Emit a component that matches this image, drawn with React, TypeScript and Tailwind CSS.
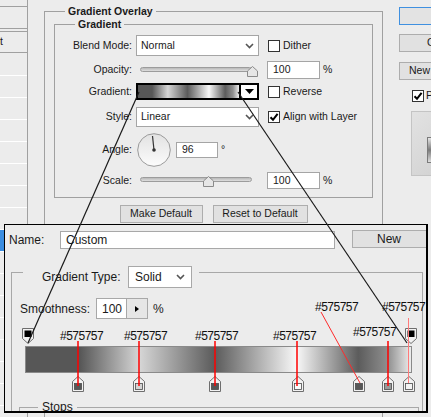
import React from 'react';

// shared gradient used by the small preview and the big editor bar
const GRADIENT =
  'bg-[linear-gradient(to_right,#575757_0%,#575757_14%,#d6d6d6_29.5%,#5b5b5b_49%,#f8f8f8_70.3%,#5c5c5c_86.3%,#8f8f8f_94%,#ededed_100%)]';

function Chevron() {
  return (
    <svg width="9" height="6" viewBox="0 0 9 6">
      <path d="M1 1l3.5 3.5L8 1" fill="none" stroke="#555" strokeWidth="1.6" />
    </svg>
  );
}

function Checkbox({ checked = false }: { checked?: boolean }) {
  return (
    <div className="w-[12px] h-[12px] shrink-0 bg-white border border-[#333] flex items-center justify-center">
      {checked && (
        <svg width="10" height="10" viewBox="0 0 10 10">
          <path d="M1.5 5.2 L4 7.8 L8.6 1.8" fill="none" stroke="#000" strokeWidth="2" />
        </svg>
      )}
    </div>
  );
}

function Thumb() {
  return (
    <svg width="11" height="11" viewBox="0 0 11 11">
      <path d="M5.5 0.5 L10.5 5 V10.5 H0.5 V5 Z" fill="#e6e6e6" stroke="#8a8a8a" />
    </svg>
  );
}

function Slider({ thumb }: { thumb: string }) {
  return (
    <div className="relative w-[123px] h-[17px] shrink-0">
      <div className="absolute left-[4px] top-[5px] w-[112px] h-[5px] rounded-full border border-[#9c9c9c] bg-[linear-gradient(#b9b9b9,#dedede)]" />
      <div className={`absolute top-[4px] ${thumb}`}>
        <Thumb />
      </div>
    </div>
  );
}

function Row({ label, className, children }: { label: string; className: string; children: React.ReactNode }) {
  return (
    <div className={`flex items-center ${className}`}>
      <div className="w-[77px] shrink-0 text-right">{label}</div>
      <div className="ml-[4px] flex items-center">{children}</div>
    </div>
  );
}

function Select({ text, className }: { text: string; className: string }) {
  return (
    <div className={`shrink-0 bg-white border border-[#a5a5a5] flex items-center justify-between pl-[4px] pr-[4px] ${className}`}>
      <span>{text}</span>
      <Chevron />
    </div>
  );
}

function LeftPanel() {
  const rows = Array.from({ length: 16 }, (_, i) => i);
  return (
    <div className="w-[28px] h-[417px] shrink-0 border-r border-[#a0a0a0] overflow-hidden">
      <div className="mt-[6px] h-[23px] border-y border-[#a0a0a0]" />
      <div className="mt-[2px] h-[22px] border-y border-[#a0a0a0] flex items-center justify-end pr-[24px] whitespace-nowrap">
        Blending Options: Default
      </div>
      {rows.map((i) => (
        <div
          key={i}
          className={`border-b border-white ${i === 0 ? 'h-[23px]' : 'h-[22px]'} ${i === 8 ? 'bg-[#3b8de0]' : ''}`}
        />
      ))}
    </div>
  );
}

function OverlayGroup() {
  return (
    <fieldset className="ml-[16px] mt-[4px] w-[339px] h-[430px] shrink-0 border border-[#a0a0a0]">
      <legend className="ml-[20px] px-[3px] font-bold leading-[14px]">Gradient Overlay</legend>

      <fieldset className="ml-[9px] w-[319px] border border-[#a0a0a0] pb-[8px]">
        <legend className="ml-[20px] px-[3px] font-bold leading-[12px]">Gradient</legend>

        <Row label="Blend Mode:" className="mt-[5px] h-[21px]">
          <Select text="Normal" className="w-[123px] h-[21px]" />
          <div className="ml-[9px] flex items-center gap-[3px]">
            <Checkbox />
            <span>Dither</span>
          </div>
        </Row>

        <Row label="Opacity:" className="mt-[5px] h-[18px]">
          <Slider thumb="left-[111px]" />
          <div className="ml-[8px] w-[53px] h-[18px] shrink-0 bg-white border border-[#a5a5a5] pl-[5px] flex items-center">100</div>
          <span className="ml-[3px]">%</span>
        </Row>

        <Row label="Gradient:" className="mt-[4px] h-[17px]">
          <div className={`w-[105px] h-[17px] shrink-0 border-2 border-black ${GRADIENT}`} />
          <div className="w-[18px] h-[17px] shrink-0 border-2 border-l-0 border-black bg-white flex items-center justify-center">
            <svg width="9" height="5" viewBox="0 0 9 5">
              <path d="M0 0 H9 L4.5 5 Z" fill="#000" />
            </svg>
          </div>
          <div className="ml-[9px] flex items-center gap-[3px]">
            <Checkbox />
            <span>Reverse</span>
          </div>
        </Row>

        <Row label="Style:" className="mt-[7px] h-[20px]">
          <Select text="Linear" className="w-[123px] h-[20px]" />
          <div className="ml-[9px] flex items-center gap-[3px]">
            <Checkbox checked />
            <span>Align with Layer</span>
          </div>
        </Row>

        <Row label="Angle:" className="mt-[6px] h-[34px]">
          <svg width="34" height="34" viewBox="0 0 34 34" className="ml-[1px] shrink-0">
            <defs>
              <linearGradient id="dial" x1="0" y1="0" x2="0" y2="1">
                <stop offset="0" stopColor="#e2e2e2" />
                <stop offset="0.55" stopColor="#f0f0f0" />
                <stop offset="1" stopColor="#fcfcfc" />
              </linearGradient>
            </defs>
            <circle cx="17" cy="17" r="16.3" fill="url(#dial)" stroke="#9a9a9a" />
            <line x1="17" y1="17" x2="15.5" y2="3" stroke="#333" strokeWidth="1.2" />
            <circle cx="17" cy="17" r="1.8" fill="#333" />
          </svg>
          <div className="ml-[5px] w-[42px] h-[16px] shrink-0 bg-white border border-[#a5a5a5] pl-[5px] flex items-center">96</div>
          <span className="ml-[3px] self-start mt-[9px]">°</span>
        </Row>

        <Row label="Scale:" className="mt-[5px] h-[17px]">
          <Slider thumb="left-[67px]" />
          <div className="ml-[8px] w-[53px] h-[17px] shrink-0 bg-white border border-[#a5a5a5] pl-[5px] flex items-center">100</div>
          <span className="ml-[3px]">%</span>
        </Row>
      </fieldset>

      <div className="mt-[7px] flex justify-center gap-[10px]">
        <div className="w-[83px] h-[18px] bg-[#e1e1e1] border border-[#adadad] flex items-center justify-center">Make Default</div>
        <div className="w-[95px] h-[18px] bg-[#e1e1e1] border border-[#adadad] flex items-center justify-center">Reset to Default</div>
      </div>
    </fieldset>
  );
}

function RightColumn() {
  return (
    <div className="ml-[16px] w-[70px] shrink-0 flex flex-col whitespace-nowrap">
      <div className="mt-[7px] h-[18px] border border-[#3f90e0] bg-[#e3e3e3] pl-[38px] flex items-center">OK</div>
      <div className="mt-[9px] h-[18px] border border-[#adadad] bg-[#e1e1e1] pl-[27px] flex items-center">Cancel</div>
      <div className="mt-[10px] h-[18px] border border-[#adadad] bg-[#e1e1e1] pl-[9px] flex items-center">New Style...</div>
      <div className="mt-[10px] h-[12px] flex items-center">
        <div className="ml-[13px]">
          <Checkbox checked />
        </div>
        <span className="ml-[2px]">Preview</span>
      </div>
      <div className="mt-[9px] ml-[12px] w-[50px] h-[65px] border border-[#c4c4c4] bg-[linear-gradient(135deg,#e2e2e2,#cfcfcf)]">
        <div className="mt-[25px] ml-[15px] w-[22px] h-[26px] border border-[#7a7a7a] bg-[linear-gradient(to_bottom,#e6e6e6,#7a7a7a,#dedede)]" />
      </div>
    </div>
  );
}

function OpacityStop() {
  return (
    <svg width="12" height="16" viewBox="0 0 12 16">
      <path d="M0.5 0.5 H11.5 V10.5 L6 15.5 L0.5 10.5 Z" fill="#f2f2f2" stroke="#6e6e6e" />
      <rect x="2.5" y="2.5" width="7" height="6.5" fill="#000" />
    </svg>
  );
}

function ColorStop({ fill }: { fill: string }) {
  return (
    <svg width="12" height="16" viewBox="0 0 12 16">
      <path d="M6 0.5 L11.5 5.5 V15.5 H0.5 V5.5 Z" fill="#f2f2f2" stroke="#6e6e6e" />
      <rect x="2.5" y="7.5" width="7" height="6" fill={fill} stroke="#4a4a4a" strokeWidth="0.8" />
    </svg>
  );
}

const colorStops = [
  { pos: 'left-[46px]', fill: '#575757' },
  { pos: 'left-[107px]', fill: '#d4d4d4' },
  { pos: 'left-[183px]', fill: '#575757' },
  { pos: 'left-[266px]', fill: '#fafafa' },
  { pos: 'left-[327px]', fill: '#575757' },
  { pos: 'left-[356px]', fill: '#9a9a9a' },
  { pos: 'left-[377px]', fill: '#f4f4f4' },
];

function GradientEditor() {
  return (
    <div className="absolute left-[4px] top-[224px] w-[424px] h-[189px] border-l border-t border-r-2 border-b-2 border-black bg-[#ececec] overflow-hidden text-[12px]">
      <div className="mt-[5px] h-[19px] flex items-start">
        <div className="ml-[4px] w-[51px] h-[19px] shrink-0 flex items-center">Name:</div>
        <div className="mt-[1px] w-[275px] h-[18px] shrink-0 bg-white border border-[#a8a8a8] pl-[5px] flex items-center">Custom</div>
        <div className="ml-[17px] w-[80px] h-[18px] shrink-0 bg-[#e1e1e1] border border-[#adadad] pl-[24px] flex items-center">New</div>
      </div>

      <div className="mt-[23px] ml-[6px] w-[412px] h-[200px] border border-[#a8a8a8]">
        <div className="-mt-[7px] ml-[11px] w-fit h-[22px] flex items-center bg-[#ececec] pl-[19px] pr-[7px]">
          <span className="w-[82px] shrink-0">Gradient Type:</span>
          <div className="ml-[4px] w-[64px] h-[22px] bg-white border border-[#a8a8a8] pl-[6px] pr-[6px] flex items-center justify-between">
            <span>Solid</span>
            <Chevron />
          </div>
        </div>

        <div className="mt-[10px] ml-[8px] h-[21px] flex items-center">
          <span className="w-[76px] shrink-0">Smoothness:</span>
          <div className="w-[31px] h-[21px] bg-white border border-[#a8a8a8] pl-[5px] flex items-center">100</div>
          <div className="w-[21px] h-[21px] bg-[#e6e6e6] border border-l-0 border-[#a8a8a8] flex items-center justify-center">
            <svg width="4" height="6" viewBox="0 0 4 6">
              <path d="M0 0 L4 3 L0 6 Z" fill="#000" />
            </svg>
          </div>
          <span className="ml-[5px]">%</span>
        </div>

        <div className={`relative mt-[27px] ml-[13px] w-[387px] h-[27px] border border-[#8a8a8a] ${GRADIENT}`}>
          <div className="absolute left-[-4px] top-[-19px]">
            <OpacityStop />
          </div>
          <div className="absolute left-[379px] top-[-19px]">
            <OpacityStop />
          </div>
          {colorStops.map((s) => (
            <div key={s.pos} className={`absolute top-[29px] ${s.pos}`}>
              <ColorStop fill={s.fill} />
            </div>
          ))}
        </div>

        <div className="mt-[34px] ml-[7px] w-[400px] h-[20px] border-t border-x border-[#a8a8a8]">
          <div className="-mt-[8px] ml-[18px] w-fit px-[4px] bg-[#ececec] leading-[14px]">Stops</div>
        </div>
      </div>
    </div>
  );
}

const labels = [
  'left-[60px] top-[330px]',
  'left-[124px] top-[330px]',
  'left-[195px] top-[330px]',
  'left-[273px] top-[330px]',
  'left-[353px] top-[326px]',
  'left-[315px] top-[301px]',
  'left-[382px] top-[301px]',
];

function Annotations() {
  return (
    <>
      <svg className="absolute left-0 top-0 pointer-events-none" width="431" height="417" viewBox="0 0 431 417">
        <line x1="139" y1="92" x2="28" y2="343" stroke="#1a1a1a" strokeWidth="1.2" />
        <line x1="238" y1="92" x2="407" y2="343" stroke="#1a1a1a" strokeWidth="1.2" />
        {[78, 139, 215, 297, 388].map((x) => (
          <line key={x} x1={x} y1="341" x2={x} y2="386" stroke="#ff0000" strokeWidth="1.5" />
        ))}
        <line x1="408.5" y1="318" x2="408.5" y2="383" stroke="#ff7a7a" strokeWidth="1" />
        <line x1="321" y1="312" x2="360" y2="383" stroke="#ff2a2a" strokeWidth="1" />
      </svg>
      {labels.map((pos) => (
        <span key={pos} className={`absolute ${pos} text-[12px] leading-none tracking-[-0.5px] text-[#111]`}>
          #575757
        </span>
      ))}
    </>
  );
}

export default function App() {
  return (
    <div className="relative w-[431px] h-[417px] overflow-hidden bg-[#ececec] font-['Liberation_Sans',Arial,sans-serif] text-[10.5px] text-[#1a1a1a]">
      <div className="flex items-start w-[431px]">
        <LeftPanel />
        <OverlayGroup />
        <RightColumn />
      </div>
      <GradientEditor />
      <Annotations />
    </div>
  );
}
